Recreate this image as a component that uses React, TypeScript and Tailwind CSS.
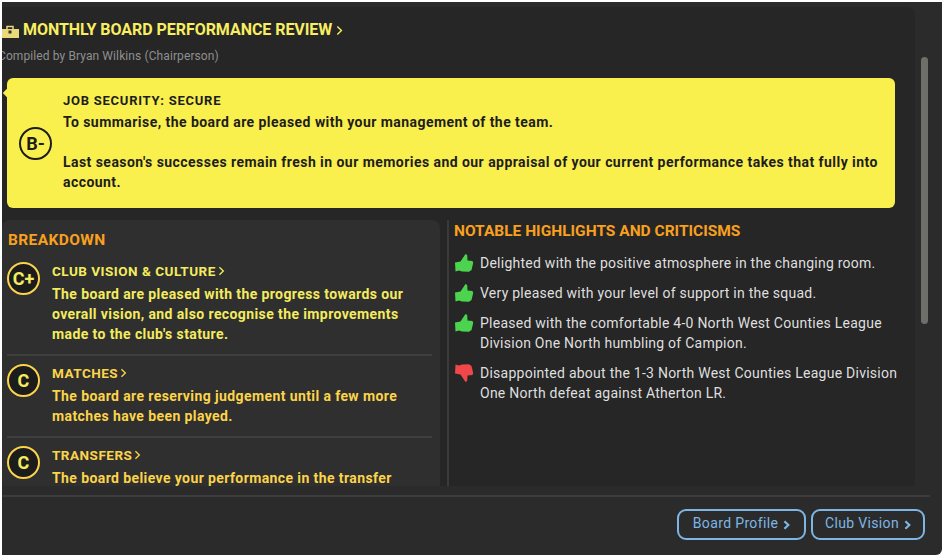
const F = "[font-family:'Roboto',sans-serif]";

function Chevron({ className, heavy }: { className: string; heavy?: boolean }) {
  return (
    <svg viewBox="0 0 8 12" className={className} fill="none" stroke="currentColor" strokeWidth={heavy ? 2.6 : 1.6}>
      <path d="M1.5 1.5 6.2 6 1.5 10.5" />
    </svg>
  );
}

function Thumb({ up }: { up: boolean }) {
  return (
    <svg viewBox="0 0 20 20" className="h-[20px] w-[20px] shrink-0">
      <path
        transform={up ? undefined : "translate(0 20) scale(1 -1)"}
        fill={up ? "#4cd44f" : "#f0474a"}
        d="M1 9.5 6.5 8.5 11.5 1 13.2 2 13.5 7.5 18.5 8 19.2 10 17.5 17 15 18.8 8 18.5 5 17.5 1.5 18.5Z"
      />
    </svg>
  );
}

function Grade({ label, yellow }: { label: string; yellow?: boolean }) {
  return (
    <div
      className={
        yellow
          ? "flex h-[33px] w-[33px] shrink-0 items-center justify-center rounded-full border-[2.5px] border-[#fcd44a] bg-[#1c1c1c] text-[18px] font-bold text-[#f4ec5f]"
          : "flex h-[33px] w-[33px] shrink-0 items-center justify-center rounded-full border-[2.5px] border-[#1d1d1d] text-[18px] font-bold text-[#1d1d1d]"
      }
    >
      {label}
    </div>
  );
}

function Item({ grade, title, lines, last, color }: { grade: string; title: string; lines: string; last?: boolean; color: string }) {
  return (
    <div className={last ? "flex gap-[12px] pt-[8px]" : "flex gap-[12px] border-b-2 border-[#3f3f3f] pt-[8px] pb-[10px]"}>
      <Grade label={grade} yellow />
      <div className="min-w-0 flex-1 pt-[1px]">
        <div className={`flex items-center gap-[2px] text-[13.5px] leading-[16px] font-bold tracking-[0.5px] ${color}`}>
          {title}
          <Chevron className="h-[10px] w-[7px]" />
        </div>
        <p className={`mt-[5px] text-[14px] leading-[20px] font-bold tracking-[0.4px] ${color}`}>{lines}</p>
      </div>
    </div>
  );
}

function Note({ up, text }: { up: boolean; text: string }) {
  return (
    <div className="flex gap-[6px]">
      <Thumb up={up} />
      <p className="flex-1 text-[14px] leading-[20px] tracking-[0.25px] text-[#dfdfdf]">{text}</p>
    </div>
  );
}

function Btn({ label, w }: { label: string; w: string }) {
  return (
    <div className={`flex h-[31px] items-center justify-center gap-[5px] rounded-[9px] border-2 border-[#7db6e6] pb-[2px] text-[14px] tracking-[0.35px] text-[#7db6e6] ${w}`}>
      {label}
      <Chevron heavy className="mt-[2px] h-[10px] w-[7px]" />
    </div>
  );
}

export default function App() {
  return (
    <div className={`h-[557px] w-[944px] overflow-hidden bg-white pt-[2px] pr-[2px] pb-[2px] pl-[2px] ${F}`}>
      <div className="flex h-full flex-col rounded-br-[6px] bg-[#2b2b2b]">
        <div className="flex h-[484px] shrink-0 pt-[5px]">
          <div className="flex h-full w-[913px] flex-col overflow-hidden rounded-tr-[8px] bg-[#262626]">
            <div className="flex h-[33px] shrink-0 items-end gap-[4px]">
              <svg viewBox="0 0 18 14" className="-ml-[1px] mb-[1px] h-[14px] w-[18px] shrink-0">
                <path fill="#e9d87c" d="M0 4h18v9H0z" />
                <path fill="none" stroke="#e9d87c" strokeWidth="1.5" d="M6 4V1.5h6V4" />
                <path fill="#3a3520" d="M7.5 5.5h3v3h-3z" />
              </svg>
              <div className="flex items-center gap-[4px] text-[16px] leading-[20px] font-bold tracking-[-0.05px] text-[#f8ee62]">
                MONTHLY BOARD PERFORMANCE REVIEW
                <Chevron className="h-[11px] w-[7px]" />
              </div>
            </div>
            <div className="mt-[9px] -ml-[4px] text-[12px] leading-[14px] tracking-[0.1px] text-[#8f8f8f]">Compiled by Bryan Wilkins (Chairperson)</div>

            <div className="relative mt-[15px] mr-[20px] ml-[5px] flex h-[130px] shrink-0 items-center gap-[10px] rounded-[6px] bg-[#f9ef4d] pr-[8px] pl-[12px] text-[#1d1d1d]">
              <div className="absolute top-[12px] -left-[3px] h-[6px] w-[6px] rotate-45 bg-[#f9ef4d]" />
              <Grade label="B-" />
              <div className="min-w-0 flex-1 pb-[2px] pl-[1px] font-bold">
                <div className="text-[13px] leading-[16px] tracking-[0.75px]">JOB SECURITY: SECURE</div>
                <p className="mt-[3px] text-[14px] leading-[20px] tracking-[0.45px]">To summarise, the board are pleased with your management of the team.</p>
                <p className="mt-[20px] text-[14px] leading-[20px] tracking-[0.45px]">Last season's successes remain fresh in our memories and our appraisal of your current performance takes that fully into account.</p>
              </div>
            </div>

            <div className="mt-[12px] flex min-h-0 flex-1">
              <div className="w-[438px] shrink-0 rounded-t-[8px] bg-[#2f2f2f] pt-[10px] pr-[8px] pl-[5px]">
                <div className="mb-[4px] pl-[1px] text-[15.5px] leading-[20px] font-bold tracking-[0.4px] text-[#f9a01f]">BREAKDOWN</div>
                <Item grade="C+" color="text-[#f4ec5f]" title="CLUB VISION & CULTURE" lines="The board are pleased with the progress towards our overall vision, and also recognise the improvements made to the club's stature." />
                <Item grade="C" color="text-[#fcd44a]" title="MATCHES" lines="The board are reserving judgement until a few more matches have been played." />
                <Item grade="C" color="text-[#fcd44a]" last title="TRANSFERS" lines="The board believe your performance in the transfer market has been adequate." />
              </div>
              <div className="ml-[7px] flex-1 border-l-2 border-[#3a3a3a] pt-[1px] pr-[12px] pl-[5px]">
                <div className="text-[15.5px] leading-[20px] font-bold text-[#f9a01f]">NOTABLE HIGHLIGHTS AND CRITICISMS</div>
                <div className="mt-[12px] flex flex-col gap-[10px]">
                  <Note up text="Delighted with the positive atmosphere in the changing room." />
                  <Note up text="Very pleased with your level of support in the squad." />
                  <Note up text="Pleased with the comfortable 4-0 North West Counties League Division One North humbling of Campion." />
                  <Note up={false} text="Disappointed about the 1-3 North West Counties League Division One North defeat against Atherton LR." />
                </div>
              </div>
            </div>
          </div>
          <div className="flex flex-1 justify-center pt-[50px] pr-[8px]">
            <div className="h-[267px] w-[7px] rounded-full bg-[#6f6f6a]" />
          </div>
        </div>
        <div className="mt-[9px] mr-[12px] flex justify-end gap-[5px] border-t-2 border-[#3c3c3c] pt-[12px] pr-[5px]">
          <Btn label="Board Profile" w="w-[129px]" />
          <Btn label="Club Vision" w="w-[114px]" />
        </div>
      </div>
    </div>
  );
}
